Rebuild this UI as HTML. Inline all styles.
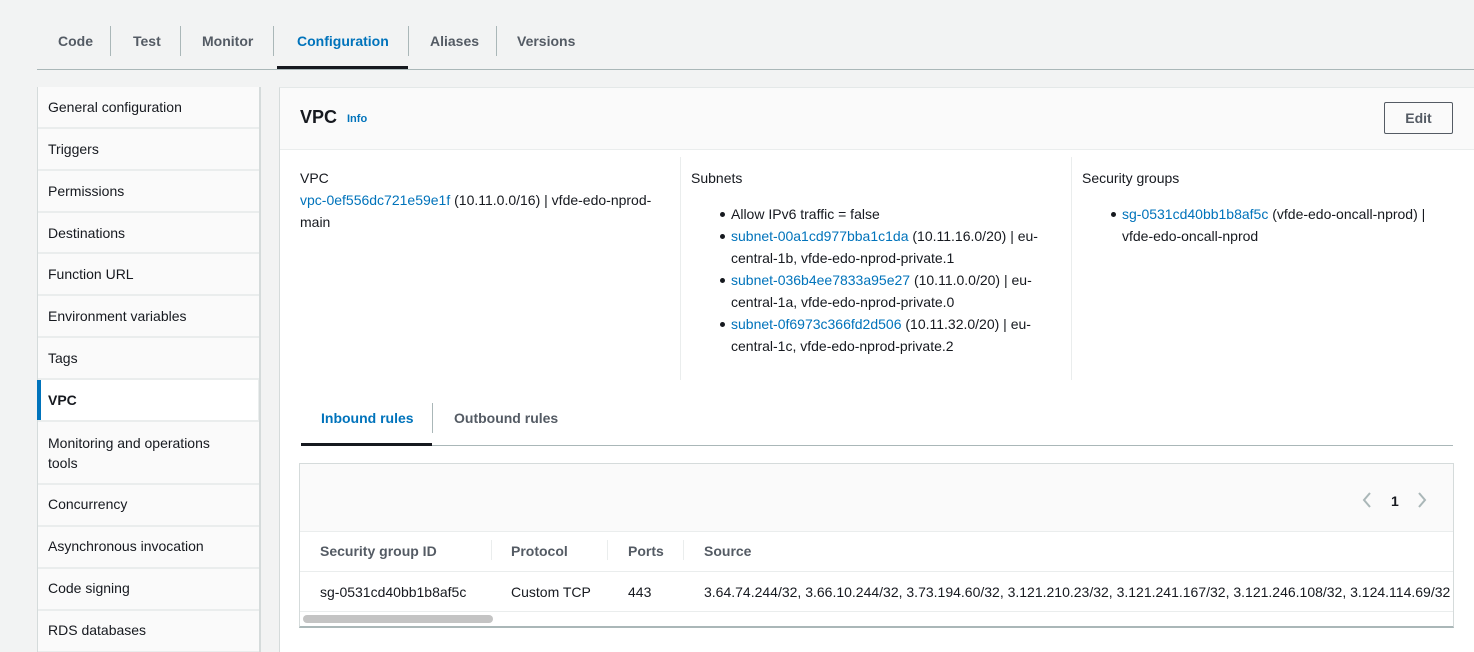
<!DOCTYPE html>
<html><head><meta charset="utf-8"><style>
*{box-sizing:border-box;margin:0;padding:0}
body{width:1474px;height:652px;overflow:hidden;background:#f2f3f3;font-family:"Liberation Sans",Arial,sans-serif;font-size:14px;color:#16191f;position:relative}
.a{position:absolute;white-space:nowrap}
.b{font-weight:bold}
.l{color:#0073bb}
.tab{position:absolute;top:33px;font-weight:bold;color:#545b64;font-size:14px}
.sep{position:absolute;top:26px;width:1px;height:30px;background:#aab7b8}
.side{position:absolute;left:37px;width:224px;background:#eaeded;top:87px;height:565px;border-right:2px solid #d5dbdb;border-left:1px solid #d5dbdb}
.it{position:absolute;left:0;width:221px;background:#fafafa;padding-left:10px;color:#16191f}
ul{list-style:none}
li{position:relative;padding-left:0}
li:before{content:"";position:absolute;left:-11px;top:9px;width:5px;height:5px;border-radius:50%;background:#16191f}
</style></head><body>
<div class="tab" style="left:58px">Code</div>
<div class="sep" style="left:110px"></div>
<div class="tab" style="left:133px">Test</div>
<div class="sep" style="left:180px"></div>
<div class="tab" style="left:202px">Monitor</div>
<div class="sep" style="left:273px"></div>
<div class="tab" style="left:297px;color:#0073bb">Configuration</div>
<div class="sep" style="left:408px"></div>
<div class="tab" style="left:430px">Aliases</div>
<div class="sep" style="left:496px"></div>
<div class="tab" style="left:517px">Versions</div>
<div class="a" style="left:37px;top:69px;width:1437px;height:1px;background:#aab7b8"></div>
<div class="a" style="left:277px;top:66px;width:131px;height:3px;background:#16191f"></div>

<div class="side">
<div class="it" style="top:0;height:40px;padding-top:12px">General configuration</div>
<div class="it" style="top:42px;height:40px;padding-top:12px">Triggers</div>
<div class="it" style="top:84px;height:40px;padding-top:12px">Permissions</div>
<div class="it" style="top:126px;height:39px;padding-top:12px">Destinations</div>
<div class="it" style="top:167px;height:40px;padding-top:12px">Function URL</div>
<div class="it" style="top:209px;height:40px;padding-top:12px">Environment variables</div>
<div class="it" style="top:251px;height:40px;padding-top:12px">Tags</div>
<div class="it b" style="top:293px;height:40px;padding-top:12px;background:#fff;border-left:4px solid #0073bb;padding-left:7px;left:-1px">VPC</div>
<div class="it" style="top:335px;height:61px;padding-top:11px;line-height:20px;white-space:normal">Monitoring and operations<br>tools</div>
<div class="it" style="top:398px;height:40px;padding-top:11px">Concurrency</div>
<div class="it" style="top:440px;height:40px;padding-top:11px">Asynchronous invocation</div>
<div class="it" style="top:482px;height:40px;padding-top:11px">Code signing</div>
<div class="it" style="top:524px;height:40px;padding-top:11px">RDS databases</div>
</div>

<div class="a" style="left:279px;top:87px;width:1195px;height:565px;background:#fff;border-left:1px solid #d5dbdb;border-top:1px solid #e4e8e8"></div>
<div class="a" style="left:280px;top:88px;width:1194px;height:62px;background:#fafafa;border-bottom:1px solid #eaeded"></div>
<div class="a b" style="left:300px;top:107px;font-size:18px">VPC</div>
<div class="a b l" style="left:347px;top:113px;font-size:11px">Info</div>
<div class="a b" style="left:1384px;top:102px;width:69px;height:32px;border:1px solid #545b64;border-radius:2px;text-align:center;line-height:30px;color:#545b64">Edit</div>

<div class="a" style="left:680px;top:157px;width:1px;height:223px;background:#eaeded"></div>
<div class="a" style="left:1071px;top:157px;width:1px;height:223px;background:#eaeded"></div>
<div class="a" style="left:300px;top:167px;line-height:22px;white-space:normal;width:375px">VPC<br><span class="l">vpc-0ef556dc721e59e1f</span> (10.11.0.0/16) | vfde-edo-nprod-<br>main</div>
<div class="a" style="left:691px;top:167px;line-height:22px">Subnets</div>
<ul class="a" style="left:731px;top:203px;line-height:22px">
<li>Allow IPv6 traffic = false</li>
<li><span class="l">subnet-00a1cd977bba1c1da</span> (10.11.16.0/20) | eu-<br>central-1b, vfde-edo-nprod-private.1</li>
<li><span class="l">subnet-036b4ee7833a95e27</span> (10.11.0.0/20) | eu-<br>central-1a, vfde-edo-nprod-private.0</li>
<li><span class="l">subnet-0f6973c366fd2d506</span> (10.11.32.0/20) | eu-<br>central-1c, vfde-edo-nprod-private.2</li>
</ul>
<div class="a" style="left:1082px;top:167px;line-height:22px">Security groups</div>
<ul class="a" style="left:1122px;top:203px;line-height:22px">
<li><span class="l">sg-0531cd40bb1b8af5c</span> (vfde-edo-oncall-nprod) |<br>vfde-edo-oncall-nprod</li>
</ul>

<div class="a b l" style="left:321px;top:410px">Inbound rules</div>
<div class="a" style="left:432px;top:403px;width:1px;height:30px;background:#aab7b8"></div>
<div class="a b" style="left:454px;top:410px;color:#545b64">Outbound rules</div>
<div class="a" style="left:301px;top:445px;width:1152px;height:1px;background:#aab7b8"></div>
<div class="a" style="left:301px;top:443px;width:131px;height:3px;background:#16191f"></div>

<div class="a" style="left:299px;top:463px;width:1155px;height:165px;border:1px solid #d5dbdb;border-bottom:2px solid #aab7b8;background:#fff;overflow:hidden">
<div class="a" style="left:0;top:0;width:1153px;height:68px;background:#fafafa;border-bottom:1px solid #eaeded"></div>
<svg class="a" style="left:1061px;top:27px" width="12" height="18" viewBox="0 0 12 18"><path d="M9 2 L3 9 L9 16" fill="none" stroke="#aab7b8" stroke-width="2"/></svg>
<div class="a b" style="left:1091px;top:29px">1</div>
<svg class="a" style="left:1116px;top:27px" width="12" height="18" viewBox="0 0 12 18"><path d="M3 2 L9 9 L3 16" fill="none" stroke="#aab7b8" stroke-width="2"/></svg>
<div class="a b" style="left:20px;top:79px;color:#545b64">Security group ID</div>
<div class="a" style="left:191px;top:76px;width:1px;height:20px;background:#eaeded"></div>
<div class="a b" style="left:211px;top:79px;color:#545b64">Protocol</div>
<div class="a" style="left:307px;top:76px;width:1px;height:20px;background:#eaeded"></div>
<div class="a b" style="left:328px;top:79px;color:#545b64">Ports</div>
<div class="a" style="left:383px;top:76px;width:1px;height:20px;background:#eaeded"></div>
<div class="a b" style="left:404px;top:79px;color:#545b64">Source</div>
<div class="a" style="left:0;top:107px;width:1153px;height:1px;background:#eaeded"></div>
<div class="a" style="left:20px;top:120px">sg-0531cd40bb1b8af5c</div>
<div class="a" style="left:211px;top:120px">Custom TCP</div>
<div class="a" style="left:328px;top:120px">443</div>
<div class="a" style="left:404px;top:120px">3.64.74.244/32, 3.66.10.244/32, 3.73.194.60/32, 3.121.210.23/32, 3.121.241.167/32, 3.121.246.108/32, 3.124.114.69/32</div>
<div class="a" style="left:0;top:147px;width:1153px;height:1px;background:#eaeded"></div>
<div class="a" style="left:3px;top:151px;width:190px;height:8px;border-radius:4px;background:#c4c4c4"></div>
</div>
</body></html>
